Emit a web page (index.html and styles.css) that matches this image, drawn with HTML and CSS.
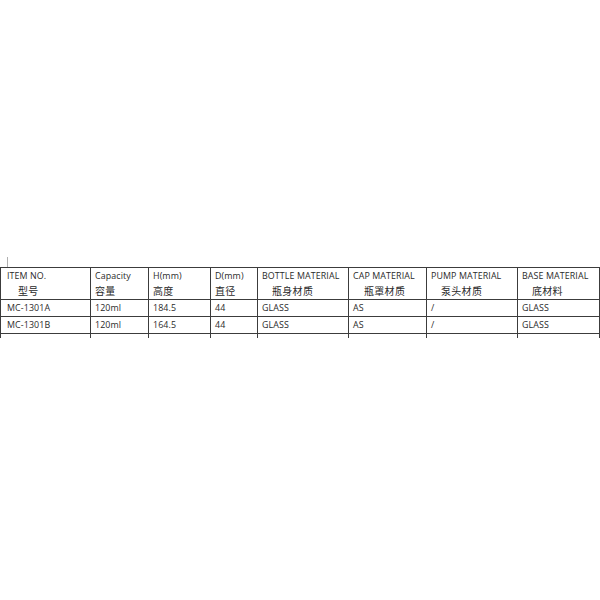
FILE: index.html
```html
<!DOCTYPE html>
<html>
<head>
<meta charset="utf-8">
<link rel="stylesheet" href="styles.css">
</head>
<body>
<div class="page">
  <div class="tick"></div>
  <table class="spec">
    <colgroup>
      <col class="c1"><col class="c2"><col class="c3"><col class="c4"><col class="c5"><col class="c6"><col class="c7"><col class="c8">
    </colgroup>
    <tr class="head">
      <td>ITEM NO.<br><span class="zh i1">型号</span></td>
      <td>Capacity<br><span class="zh">容量</span></td>
      <td>H(mm)<br><span class="zh">高度</span></td>
      <td>D(mm)<br><span class="zh">直径</span></td>
      <td>BOTTLE MATERIAL<br><span class="zh i2">瓶身材质</span></td>
      <td>CAP MATERIAL<br><span class="zh i3">瓶罩材质</span></td>
      <td>PUMP MATERIAL<br><span class="zh i2">泵头材质</span></td>
      <td>BASE MATERIAL<br><span class="zh i2">底材料</span></td>
    </tr>
    <tr class="row">
      <td>MC-1301A</td><td>120ml</td><td>184.5</td><td>44</td><td>GLASS</td><td>AS</td><td>/</td><td>GLASS</td>
    </tr>
    <tr class="row">
      <td>MC-1301B</td><td>120ml</td><td>164.5</td><td>44</td><td>GLASS</td><td>AS</td><td>/</td><td>GLASS</td>
    </tr>
    <tr class="stub">
      <td></td><td></td><td></td><td></td><td></td><td></td><td></td><td></td>
    </tr>
  </table>
</div>
</body>
</html>
```
FILE: styles.css
```css
html, body {
  margin: 0;
  padding: 0;
  background: #ffffff;
}
.page {
  width: 600px;
  height: 600px;
  padding-top: 257px;
  box-sizing: border-box;
}
.tick {
  width: 1px;
  height: 10px;
  margin-left: 7px;
  background: #b0b0b0;
}
.spec {
  border-collapse: collapse;
  table-layout: fixed;
  width: 599px;
  font-family: "Open Sans", "Noto Sans CJK SC", sans-serif;
  font-size: 8.9px;
  letter-spacing: 0.1px;
  color: #2a2a2a;
}
.c1 { width: 90px; }
.c2 { width: 58px; }
.c3 { width: 62px; }
.c4 { width: 47px; }
.c5 { width: 91px; }
.c6 { width: 78px; }
.c7 { width: 91px; }
.c8 { width: 82px; }
.spec td {
  border: 1px solid #3c3c3c;
  padding: 0 0 0 4px;
  vertical-align: middle;
  white-space: nowrap;
  overflow: hidden;
}
.spec tr.head td {
  height: 31px;
  line-height: 15px;
  padding-top: 0;
}
.spec tr.row td {
  height: 16px;
  line-height: 16px;
}
.spec tr.stub td {
  height: 4px;
  border-bottom: none;
  padding: 0;
}
.spec tr.head td:first-child,
.spec tr.row td:first-child {
  padding-left: 6px;
}
.zh {
  font-family: "Noto Sans CJK SC", sans-serif;
  font-size: 10px;
  letter-spacing: 0.3px;
}
.i1 { padding-left: 11px; }
.i2 { padding-left: 10px; }
.i3 { padding-left: 11px; }
```
